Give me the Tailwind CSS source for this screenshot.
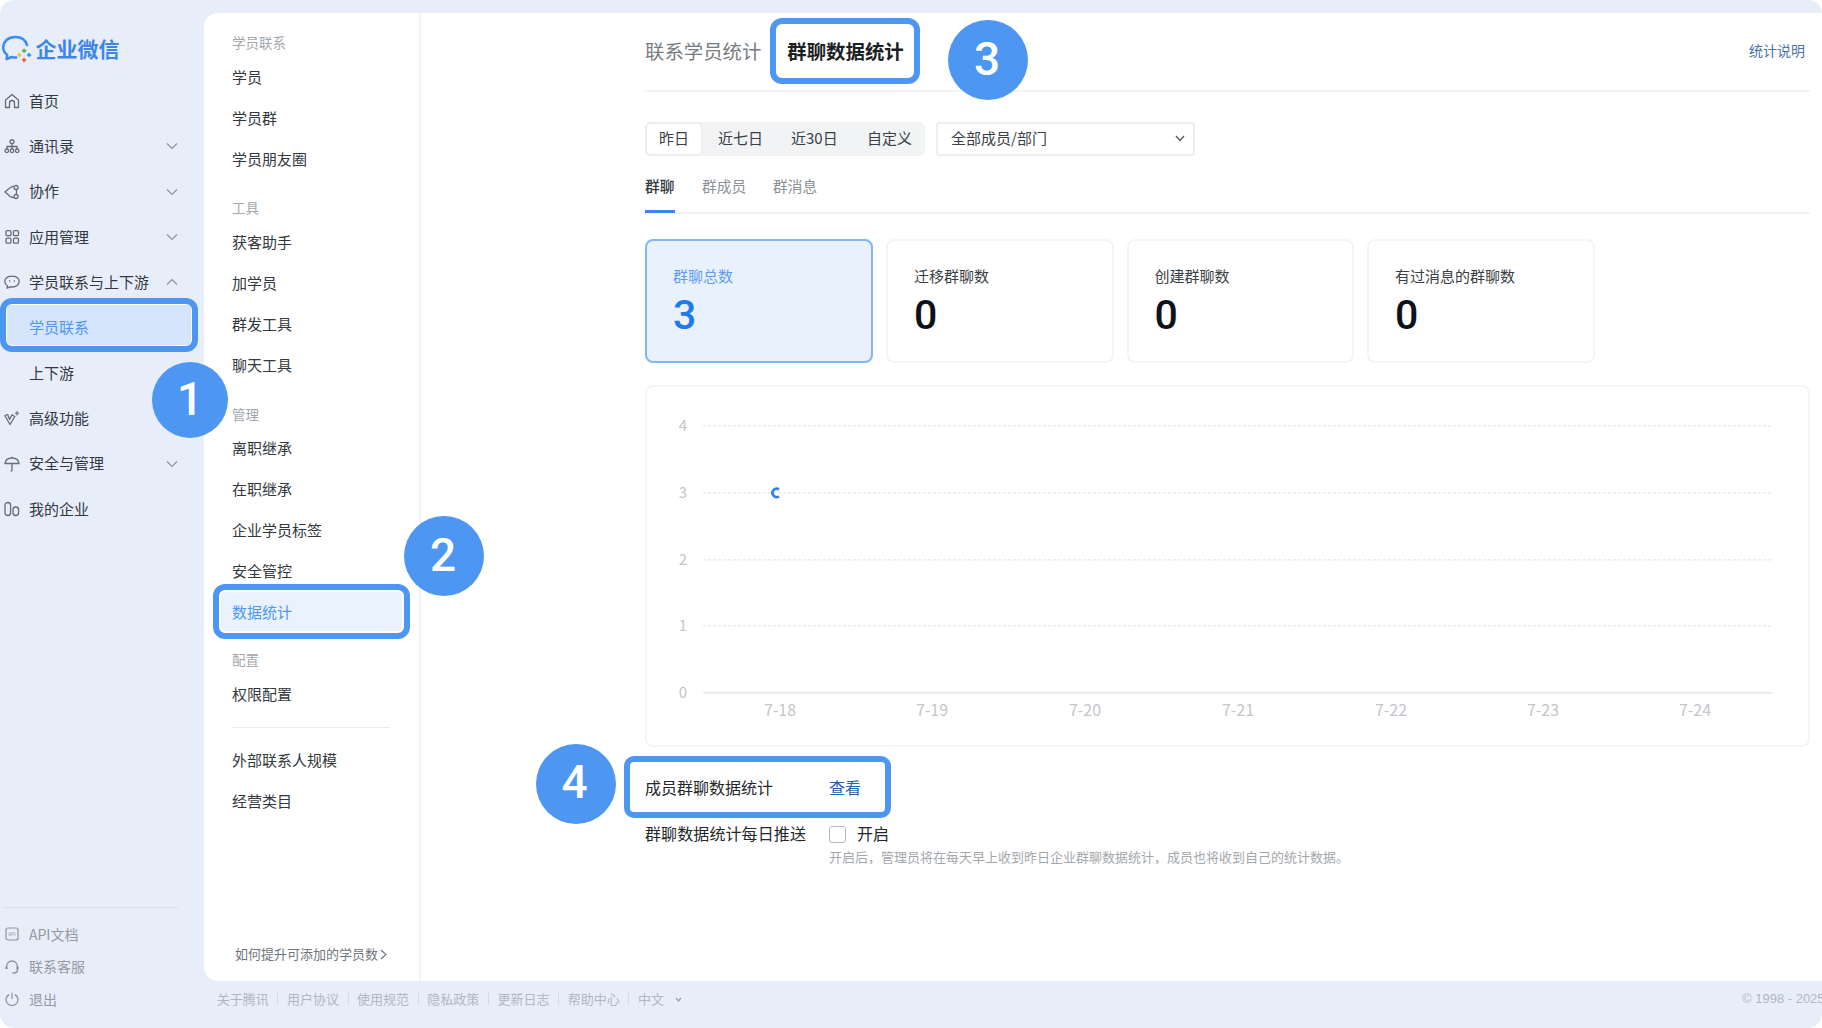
<!DOCTYPE html>
<html lang="zh">
<head>
<meta charset="utf-8">
<script src="https://cdn.jsdelivr.net/npm/@tailwindcss/browser@4"></script>
</head>
<body class="bg-white">
<div class="relative w-[1822px] h-[1028px] flex overflow-hidden rounded-[14px] bg-[#e7eefa] text-[15px] text-[#33383e] font-['Noto_Sans_CJK_SC','Noto_Sans',sans-serif]">

  <!-- primary nav -->
  <aside class="w-[204px] shrink-0 flex flex-col">
    <div class="h-[78.5px] pt-[35px] pl-[2px] flex items-start gap-[1.5px]">
      <svg class="w-[32px] h-[28px]" viewBox="0 0 32 28" fill="none">
        <path d="M25 10C23.5 5 19 2 13.5 2C6 2 1.2 6.5 1.2 12.5C1.2 15.5 2.8 18.2 5.2 20L4.6 24.2L9.6 22C11 22.5 12.5 22.7 14.2 22.6" stroke="#3d8bf0" stroke-width="2.5" stroke-linecap="round" stroke-linejoin="round"/>
        <path d="M22 13.2L24.8 15.7L22 18.3L19.6 15.7Z" fill="#62b84a"/>
        <path d="M17.3 17.6L19.9 20L17.3 22.4L14.9 20Z" fill="#f5c43a"/>
        <path d="M22 22.4L24.6 25L22 27.6L19.6 25Z" fill="#ee6a3c"/>
        <path d="M27 17.8L29.6 20L27 22.2L24.6 20Z" fill="#3d8bf0"/>
      </svg>
      <span class="text-[21px] font-semibold leading-[26px] text-[#3c86ea]">企业微信</span>
    </div>

    <nav class="flex flex-col">
      <div class="h-[45.3px] flex items-center pl-[4px] gap-[9px]">
        <svg class="w-[16px] h-[16px]" viewBox="0 0 16 16" fill="none" stroke="#666c73" stroke-width="1.3"><path d="M1.5 7L8 1.5L14.5 7V14.5H10.5V10C10.5 8.6 9.4 7.5 8 7.5C6.6 7.5 5.5 8.6 5.5 10V14.5H1.5Z" stroke-linejoin="round"/></svg>
        <span>首页</span>
      </div>
      <div class="h-[45.3px] flex items-center pl-[4px] gap-[9px]">
        <svg class="w-[16px] h-[16px]" viewBox="0 0 16 16" fill="none" stroke="#666c73" stroke-width="1.3"><rect x="6" y="2" width="4" height="3.5" rx="1.5"/><path d="M8 5.5V8M3 11V8.5H13V11M8 8V11"/><circle cx="2.8" cy="12.8" r="1.8"/><circle cx="8" cy="12.8" r="1.8"/><circle cx="13.2" cy="12.8" r="1.8"/></svg>
        <span>通讯录</span>
        <svg class="ml-auto mr-[26px] w-[12px] h-[8px]" viewBox="0 0 12 8" fill="none" stroke="#8d939a" stroke-width="1.2"><path d="M1 1.5L6 6.5L11 1.5"/></svg>
      </div>
      <div class="h-[45.3px] flex items-center pl-[4px] gap-[9px]">
        <svg class="w-[16px] h-[16px]" viewBox="0 0 16 16" fill="none" stroke="#666c73" stroke-width="1.3"><path d="M9.8 2.2C7 2.6 5 4.4 1 8L4 10.5C5 12 7 13.6 9.8 13.7M12.5 5.5V10.5"/><circle cx="12" cy="3.5" r="2"/><circle cx="12" cy="12.5" r="2"/></svg>
        <span>协作</span>
        <svg class="ml-auto mr-[26px] w-[12px] h-[8px]" viewBox="0 0 12 8" fill="none" stroke="#8d939a" stroke-width="1.2"><path d="M1 1.5L6 6.5L11 1.5"/></svg>
      </div>
      <div class="h-[45.3px] flex items-center pl-[4px] gap-[9px]">
        <svg class="w-[16px] h-[16px]" viewBox="0 0 16 16" fill="none" stroke="#666c73" stroke-width="1.3"><rect x="2" y="1.7" width="5" height="5" rx="1.2"/><rect x="9.5" y="1.7" width="5" height="5" rx="1.2"/><rect x="2" y="9.2" width="5" height="5" rx="1.2"/><rect x="9.5" y="9.2" width="5" height="5" rx="1.2"/></svg>
        <span>应用管理</span>
        <svg class="ml-auto mr-[26px] w-[12px] h-[8px]" viewBox="0 0 12 8" fill="none" stroke="#8d939a" stroke-width="1.2"><path d="M1 1.5L6 6.5L11 1.5"/></svg>
      </div>
      <div class="h-[45.3px] flex items-center pl-[4px] gap-[9px]">
        <svg class="w-[16px] h-[16px]" viewBox="0 0 16 16" fill="none" stroke="#666c73" stroke-width="1.3"><path d="M8 2C3.8 2 .8 4.4.8 7.5C.8 9.3 1.8 10.8 3.4 11.8L3.2 14.2L6 12.9C6.6 13 7.3 13 8 13C12.2 13 15.2 10.6 15.2 7.5C15.2 4.4 12.2 2 8 2Z" stroke-linejoin="round"/><circle cx="5.6" cy="7" r=".8" fill="#666c73" stroke="none"/><circle cx="10.4" cy="7" r=".8" fill="#666c73" stroke="none"/></svg>
        <span>学员联系与上下游</span>
        <svg class="ml-auto mr-[26px] w-[12px] h-[8px]" viewBox="0 0 12 8" fill="none" stroke="#8d939a" stroke-width="1.2"><path d="M1 6.5L6 1.5L11 6.5"/></svg>
      </div>
      <div class="h-[45.3px] flex items-center pl-[29px]"><span class="relative z-10 text-[#4d97f3]">学员联系</span></div>
      <div class="h-[45.3px] flex items-center pl-[29px]"><span>上下游</span></div>
      <div class="h-[45.3px] flex items-center pl-[4px] gap-[9px]">
        <svg class="w-[16px] h-[16px]" viewBox="0 0 16 16" fill="none" stroke="#666c73" stroke-width="1.3"><path d="M.8 5.5L6 14.5L10.8 6.5L8 4.8L5.6 9.5L3.6 4.5Z" stroke-linejoin="round"/><path d="M13 1V5.5M10.8 3.3H15.2" stroke-width="1.1"/></svg>
        <span>高级功能</span>
      </div>
      <div class="h-[45.3px] flex items-center pl-[4px] gap-[9px]">
        <svg class="w-[16px] h-[16px]" viewBox="0 0 16 16" fill="none" stroke="#666c73" stroke-width="1.3"><path d="M1 7.5C1.5 4 4.5 2 8 2C11.5 2 14.5 4 15 7.5Z" stroke-linejoin="round"/><path d="M8 .8V2M8 7.5V14C8 14.8 7.4 15.2 6.6 15.2"/></svg>
        <span>安全与管理</span>
        <svg class="ml-auto mr-[26px] w-[12px] h-[8px]" viewBox="0 0 12 8" fill="none" stroke="#8d939a" stroke-width="1.2"><path d="M1 1.5L6 6.5L11 1.5"/></svg>
      </div>
      <div class="h-[45.3px] flex items-center pl-[4px] gap-[9px]">
        <svg class="w-[16px] h-[16px]" viewBox="0 0 16 16" fill="none" stroke="#666c73" stroke-width="1.3"><rect x="1" y="1.5" width="5.6" height="13" rx="2.8"/><rect x="9" y="6" width="5.6" height="8.5" rx="2.8"/></svg>
        <span>我的企业</span>
      </div>
    </nav>

    <div class="mt-auto pb-[12.7px] text-[14px] text-[#94999f]">
      <div class="w-[174px] ml-[4px] border-t border-[#d8dee8] mb-[10px]"></div>
      <div class="h-[32.5px] flex items-center pl-[5px] gap-[10px]">
        <svg class="w-[14px] h-[14px]" viewBox="0 0 14 14" fill="none" stroke="#8d939a" stroke-width="1.2"><rect x="1" y="1" width="12" height="12" rx="2"/><text x="7" y="8.6" font-size="4.5" text-anchor="middle" fill="#8d939a" stroke="none">API</text></svg>
        <span>API文档</span>
      </div>
      <div class="h-[32.5px] flex items-center pl-[5px] gap-[10px]">
        <svg class="w-[14px] h-[14px]" viewBox="0 0 14 14" fill="none" stroke="#8d939a" stroke-width="1.4"><path d="M1.5 8.5V6.5C1.5 3.5 4 1 7 1C10 1 12.5 3.5 12.5 6.5V9.5C12.5 11.5 11 13 9 13H7.5"/><path d="M1.5 7V9" stroke-width="2.4"/><path d="M12.5 7V9" stroke-width="2.4"/></svg>
        <span>联系客服</span>
      </div>
      <div class="h-[32.5px] flex items-center pl-[5px] gap-[10px]">
        <svg class="w-[14px] h-[14px]" viewBox="0 0 14 14" fill="none" stroke="#8d939a" stroke-width="1.2"><path d="M4.2 2.6C2.3 3.6 1 5.6 1 7.8C1 11 3.7 13.5 7 13.5C10.3 13.5 13 11 13 7.8C13 5.6 11.7 3.6 9.8 2.6M7 .8V7"/></svg>
        <span>退出</span>
      </div>
    </div>
  </aside>

  <!-- right column -->
  <div class="flex-1 min-w-0 flex flex-col pt-[13px]">
    <div class="h-[968px] flex bg-white rounded-tl-[14px] rounded-bl-[14px]">

      <!-- secondary nav -->
      <div class="w-[217px] shrink-0 border-r-2 border-[#f2f3f5] pl-[28px] pt-[17px] pb-[17px] flex flex-col">
        <div class="w-[158px] h-[27px] pb-[2px] flex items-center text-[13.5px] text-[#a3a7ac]">学员联系</div>
        <div class="h-[41px] flex items-center">学员</div>
        <div class="h-[41px] flex items-center">学员群</div>
        <div class="h-[41px] flex items-center">学员朋友圈</div>
        <div class="mt-[15px] h-[27px] pb-[2px] flex items-center text-[13.5px] text-[#a3a7ac]">工具</div>
        <div class="h-[41px] flex items-center">获客助手</div>
        <div class="h-[41px] flex items-center">加学员</div>
        <div class="h-[41px] flex items-center">群发工具</div>
        <div class="h-[41px] flex items-center">聊天工具</div>
        <div class="mt-[15px] h-[27px] pb-[1px] flex items-center text-[13.5px] text-[#a3a7ac]">管理</div>
        <div class="h-[41px] flex items-center">离职继承</div>
        <div class="h-[41px] flex items-center">在职继承</div>
        <div class="h-[41px] flex items-center">企业学员标签</div>
        <div class="h-[41px] flex items-center">安全管控</div>
        <div class="h-[41px] flex items-center"><span class="relative z-10 text-[#4d97f3]">数据统计</span></div>
        <div class="mt-[14px] h-[27px] pb-[2px] flex items-center text-[13.5px] text-[#a3a7ac]">配置</div>
        <div class="h-[41px] flex items-center">权限配置</div>
        <div class="w-[158px] mt-[12px] mb-[12px] border-t border-[#e9ebee]"></div>
        <div class="h-[41px] flex items-center">外部联系人规模</div>
        <div class="h-[41px] flex items-center">经营类目</div>
        <div class="mt-auto ml-[3px] h-[20px] flex items-center gap-[2px] text-[13px] text-[#6f747a]">
          <span>如何提升可添加的学员数</span>
          <svg class="w-[7px] h-[11px]" viewBox="0 0 7 11" fill="none" stroke="#6f747a" stroke-width="1.1"><path d="M1 1L6 5.5L1 10"/></svg>
        </div>
      </div>

      <!-- main -->
      <main class="flex-1 min-w-0 pl-[224px] pr-[12px] flex flex-col">
        <header class="h-[79px] pb-[2px] border-b-2 border-[#f3f4f6] flex items-center">
          <span class="text-[19.4px] text-[#777c82]">联系学员统计</span>
          <span class="ml-[26px] relative z-10 text-[19.4px] font-bold text-[#1c1f23]">群聊数据统计</span>
          <span class="ml-auto mr-[5px] text-[14px] text-[#4a73aa]">统计说明</span>
        </header>

        <div class="mt-[30px] flex gap-[11px]">
          <div class="w-[280px] h-[34px] rounded-[6px] bg-[#f1f3f5] flex items-center whitespace-nowrap text-[#3a3f45]">
            <div class="w-[58px] h-[34px] pb-[2px] rounded-[6px] bg-white border-2 border-[#eceef0] flex items-center justify-center">昨日</div>
            <div class="ml-[15px] w-[44px] pb-[2px] text-center">近七日</div>
            <div class="ml-[29px] w-[46px] pb-[2px] text-center">近30日</div>
            <div class="ml-[30px] w-[44px] pb-[2px] text-center">自定义</div>
          </div>
          <div class="w-[259px] h-[34px] pb-[2px] rounded-[3px] border-2 border-[#eceef0] flex items-center pl-[13px] pr-[8px] text-[#3a3f45]">
            <span>全部成员/部门</span>
            <svg class="ml-auto w-[10px] h-[7px]" viewBox="0 0 10 7" fill="none" stroke="#555b62" stroke-width="1.3"><path d="M1 1L5 5.5L9 1"/></svg>
          </div>
        </div>

        <div class="mt-[14px] h-[44px] border-b-2 border-[#f3f4f6] flex gap-[27px] text-[14.7px] text-[#8b9096]">
          <div class="w-[30px] h-[43px] pt-[6px] leading-[20px] whitespace-nowrap border-b-[3px] border-[#3d86ef] font-medium text-[#33383e]">群聊</div>
          <div class="pt-[6px] leading-[20px]">群成员</div>
          <div class="pt-[6px] leading-[20px]">群消息</div>
        </div>

        <div class="mt-[25px] flex gap-[13px]">
          <div class="w-[228px] h-[124px] rounded-[8px] border-2 border-[#82b4f6] bg-[#e9f1fc] pl-[26px] pt-[25px]">
            <div class="h-[20px] leading-[20px] text-[#5f9cf0]">群聊总数</div>
            <div class="mt-[5px] h-[48px] leading-[48px] text-[41px] font-medium font-['Roboto',sans-serif] text-[#1f7bec]">3</div>
          </div>
          <div class="w-[227.5px] h-[124px] rounded-[8px] border-2 border-[#f4f5f6] pl-[26px] pt-[25px]">
            <div class="h-[20px] leading-[20px] text-[#3a3f45]">迁移群聊数</div>
            <div class="mt-[5px] h-[48px] leading-[48px] text-[41px] font-medium font-['Roboto',sans-serif] text-[#0e1218]">0</div>
          </div>
          <div class="w-[227.5px] h-[124px] rounded-[8px] border-2 border-[#f4f5f6] pl-[26px] pt-[25px]">
            <div class="h-[20px] leading-[20px] text-[#3a3f45]">创建群聊数</div>
            <div class="mt-[5px] h-[48px] leading-[48px] text-[41px] font-medium font-['Roboto',sans-serif] text-[#0e1218]">0</div>
          </div>
          <div class="w-[227.5px] h-[124px] rounded-[8px] border-2 border-[#f4f5f6] pl-[26px] pt-[25px]">
            <div class="h-[20px] leading-[20px] text-[#3a3f45]">有过消息的群聊数</div>
            <div class="mt-[5px] h-[48px] leading-[48px] text-[41px] font-medium font-['Roboto',sans-serif] text-[#0e1218]">0</div>
          </div>
        </div>

        <div class="mt-[21.6px] h-[362px] rounded-[8px] border-2 border-[#f4f5f6]">
          <svg class="block w-[1161px] h-[358px]" viewBox="647 386.6 1161 358" fill="none" font-size="15">
            <g stroke="#dfe1e4" stroke-width="1" stroke-dasharray="3 2">
              <path d="M703 425.5H1772M703 492.5H1772M703 559.5H1772M703 625.5H1772"/>
            </g>
            <path d="M703 692.5H1772" stroke="#d9dbde"/>
            <path d="M779 489A4.2 4.2 0 1 0 779 496" stroke="#2f7fec" stroke-width="2.6"/>
            <g fill="#c3c6ca" text-anchor="middle">
              <text x="683" y="431">4</text>
              <text x="683" y="498">3</text>
              <text x="683" y="565">2</text>
              <text x="683" y="631">1</text>
              <text x="683" y="698">0</text>
            </g>
            <g fill="#c3c6ca" text-anchor="middle" font-size="16">
              <text x="780" y="716">7-18</text>
              <text x="932" y="716">7-19</text>
              <text x="1085" y="716">7-20</text>
              <text x="1238" y="716">7-21</text>
              <text x="1391" y="716">7-22</text>
              <text x="1543" y="716">7-23</text>
              <text x="1695" y="716">7-24</text>
            </g>
          </svg>
        </div>

        <div class="mt-[28.5px] h-[24px] flex items-center text-[16px] text-[#23272c]">
          <span class="w-[184px]">成员群聊数据统计</span>
          <span class="text-[#1f63b5]">查看</span>
        </div>
        <div class="mt-[22px] h-[24px] flex items-center text-[16px] text-[#23272c]">
          <span class="w-[184px] tracking-[0.1px]">群聊数据统计每日推送</span>
          <span class="mt-[2px] w-[17px] h-[17px] rounded-[3px] border border-[#b4b8bd] bg-white"></span>
          <span class="ml-[11px]">开启</span>
        </div>
        <div class="mt-[2px] ml-[184px] h-[20px] leading-[20px] text-[13px] text-[#a3a7ac] whitespace-nowrap">开启后，管理员将在每天早上收到昨日企业群聊数据统计，成员也将收到自己的统计数据。</div>
      </main>
    </div>

    <!-- footer -->
    <footer class="flex-1 pt-[8px] pl-[12.7px] flex items-start text-[13px] leading-[20px] text-[#b1b6bf]">
      <div class="flex items-center gap-[8.6px]">
        <span>关于腾讯</span><span class="h-[12px] border-l border-[#d5dae3]"></span>
        <span>用户协议</span><span class="h-[12px] border-l border-[#d5dae3]"></span>
        <span>使用规范</span><span class="h-[12px] border-l border-[#d5dae3]"></span>
        <span>隐私政策</span><span class="h-[12px] border-l border-[#d5dae3]"></span>
        <span>更新日志</span><span class="h-[12px] border-l border-[#d5dae3]"></span>
        <span>帮助中心</span><span class="h-[12px] border-l border-[#d5dae3]"></span>
        <span>中文</span>
        <svg class="ml-[2px] w-[7px] h-[5px]" viewBox="0 0 7 5" fill="none" stroke="#9ba1aa" stroke-width="1.2"><path d="M1 1L3.5 4L6 1"/></svg>
      </div>
      <span class="ml-auto w-[80px] whitespace-nowrap font-['Liberation_Sans',sans-serif]">© 1998 - 2025</span>
    </footer>
  </div>

  <!-- annotation overlays -->
  <div class="absolute z-[5] left-0 top-[298px] w-[198px] h-[54px] rounded-[12px] border-[6px] border-[#4d97f3] bg-white">
    <div class="absolute inset-[1px] rounded-[4px] bg-[#d5e5fb]"></div>
  </div>
  <div class="absolute z-[5] left-[213px] top-[584px] w-[197px] h-[55px] rounded-[12px] border-[6px] border-[#4d97f3] bg-white">
    <div class="absolute inset-[2px] rounded-[4px] bg-[#eaf2fd]"></div>
  </div>
  <div class="absolute z-[5] left-[770px] top-[18px] w-[150px] h-[66px] rounded-[12px] border-[6px] border-[#4d97f3]"></div>
  <div class="absolute z-[5] left-[624px] top-[756px] w-[267px] h-[62px] rounded-[10px] border-[6px] border-[#4d97f3]"></div>

  <div class="absolute z-20 left-[152px] top-[362px] w-[76px] h-[76px] pb-[2px] rounded-full bg-[#4d97f3] flex items-center justify-center text-white text-[46px] font-medium font-['Roboto',sans-serif]">1</div>
  <div class="absolute z-20 left-[404px] top-[516px] w-[80px] h-[80px] pb-[2px] pr-[2px] rounded-full bg-[#4d97f3] flex items-center justify-center text-white text-[46px] font-medium font-['Roboto',sans-serif]">2</div>
  <div class="absolute z-20 left-[948px] top-[20px] w-[80px] h-[80px] pb-[2px] pr-[2px] rounded-full bg-[#4d97f3] flex items-center justify-center text-white text-[46px] font-medium font-['Roboto',sans-serif]">3</div>
  <div class="absolute z-20 left-[536px] top-[744px] w-[80px] h-[80px] pb-[4px] pr-[3px] rounded-full bg-[#4d97f3] flex items-center justify-center text-white text-[46px] font-medium font-['Roboto',sans-serif]">4</div>
</div>
</body>
</html>
